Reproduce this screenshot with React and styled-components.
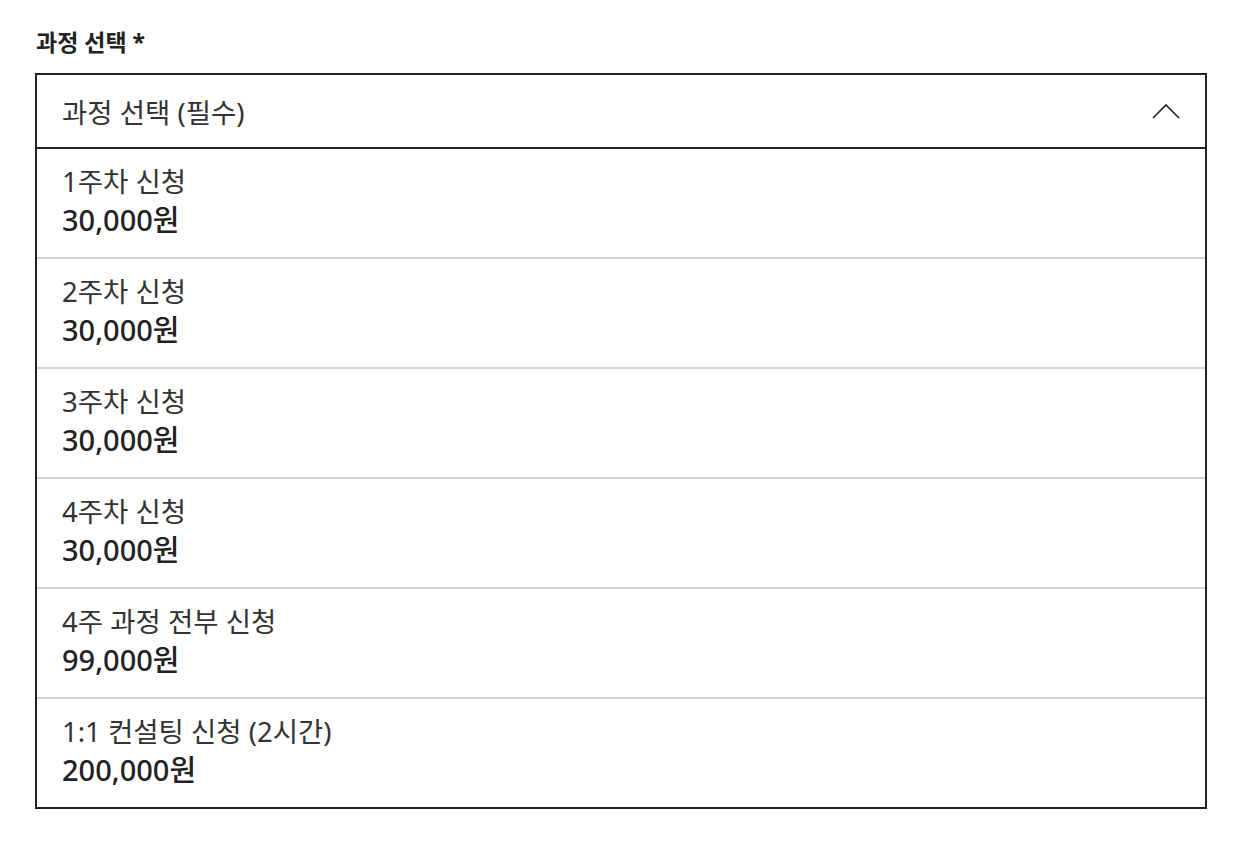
import React from "react";
import styled, { createGlobalStyle } from "styled-components";

const GlobalStyle = createGlobalStyle`
  body {
    margin: 0;
    background: #fff;
    font-family: "Noto Sans", "Noto Sans CJK KR", sans-serif;
    color: #222;
  }
`;

const courses = [
  { title: "1주차 신청", price: "30,000원" },
  { title: "2주차 신청", price: "30,000원" },
  { title: "3주차 신청", price: "30,000원" },
  { title: "4주차 신청", price: "30,000원" },
  { title: "4주 과정 전부 신청", price: "99,000원" },
  { title: "1:1 컨설팅 신청 (2시간)", price: "200,000원" },
];

const App = () => {
  return (
    <>
      <GlobalStyle />
      <Wrapper>
        <Label>과정 선택 *</Label>
        <Select>
          <Header>
            <Placeholder>과정 선택 (필수)</Placeholder>
            <svg width="28" height="16" viewBox="0 0 28 16" fill="none">
              <path d="M1 15L14 2L27 15" stroke="#222" strokeWidth="1.6" />
            </svg>
          </Header>
          <List>
            {courses.map((c, i) => (
              <Option key={i}>
                <Title>{c.title}</Title>
                <Price>{c.price}</Price>
              </Option>
            ))}
          </List>
        </Select>
      </Wrapper>
    </>
  );
};

export default App;

const Wrapper = styled.div`
  padding: 27px 53px 0 35px;
`;

const Label = styled.div`
  font-size: 23px;
  font-weight: 700;
  line-height: 30px;
  margin-left: 1px;
  margin-bottom: 16px;
`;

const Select = styled.div`
  border: 2px solid #222;
`;

const Header = styled.div`
  display: flex;
  align-items: center;
  justify-content: space-between;
  height: 72px;
  padding: 0 25px;
  border-bottom: 2px solid #222;
`;

const Placeholder = styled.span`
  font-size: 27.5px;
  color: #333;
`;

const List = styled.div`
  display: flex;
  flex-direction: column;
`;

const Option = styled.div`
  height: 94px;
  padding: 14px 25px 0;
  & + & {
    border-top: 2px solid #d2d2d2;
  }
`;

const Title = styled.div`
  font-size: 27.5px;
  line-height: 38px;
  color: #333;
`;

const Price = styled.div`
  font-size: 29px;
  line-height: 38px;
  font-weight: 500;
  color: #222;
`;
